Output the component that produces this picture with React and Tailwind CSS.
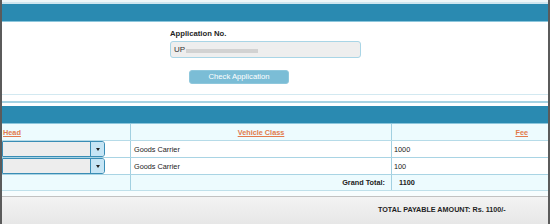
import React from 'react'

const rows = [
  { vehicleClass: 'Goods Carrier', fee: '1000' },
  { vehicleClass: 'Goods Carrier', fee: '100' },
]

function HeadSelect() {
  return (
    <div className="flex h-[16px] w-[103px] border border-[#3a8db5] bg-[#ededed] rounded-r-[3px] overflow-hidden">
      <div className="flex-1" />
      <div className="flex w-[14px] items-center justify-center border-l border-[#3a8db5] bg-[#c6e5f5]">
        <span className="block h-0 w-0 border-x-[2.5px] border-t-[3px] border-x-transparent border-t-[#222]" />
      </div>
    </div>
  )
}

export default function App() {
  return (
    <div className="h-[224px] w-[550px] overflow-hidden border-x-2 border-[#5b5b5b] bg-white font-['Liberation_Sans',Arial,sans-serif] text-[#222]">
      <div className="h-[2px] bg-[#eef6f8]" />
      <div className="h-[2px] bg-[#cfe6ef]" />
      <div className="h-[17px] bg-[#2a8ab1]" />
      <div className="h-[1px] bg-[#8cc6dc]" />

      <div className="flex h-[72px] flex-col items-start pl-[168px] pt-[7px]">
        <div className="text-[7.7px] font-bold leading-[9px] text-[#1f1f1f]">Application No.</div>
        <div className="mt-[3px] flex h-[17px] w-[191px] items-center rounded-[3px] border border-[#a9d5e6] bg-[#eeeeee] pl-[3px]">
          <span className="text-[8px] leading-none text-[#333]">UP</span>
          <span className="ml-[1px] mt-[2px] block h-[4px] w-[72px] bg-[#d2d2d2] blur-[0.6px]" />
        </div>
        <button className="ml-[19px] mt-[12px] flex h-[14px] w-[100px] items-center justify-center rounded-[3px] border border-[#8ec7dc] bg-[#7bbdd6] text-[7.7px] leading-none text-white">
          Check Application
        </button>
      </div>

      <div className="h-[1px] bg-[#d3e9f1]" />
      <div className="h-[6px]" />
      <div className="h-[2px] bg-[#a6d3e3]" />
      <div className="h-[3px]" />
      <div className="h-[17px] bg-[#2a8ab1]" />
      <div className="h-[1px] bg-[#8cc6dc]" />

      <div className="text-[7.3px] leading-[9px]">
        <div className="grid h-[17px] grid-cols-[128px_261px_1fr] border-b border-[#b6dbe8] bg-[#edfbfe]">
          <div className="flex items-center pl-[1px]">
            <span className="font-bold text-[#e27a4c] underline">Head</span>
          </div>
          <div className="flex items-center justify-center border-l border-[#a2d0e1]">
            <span className="font-bold text-[#e27a4c] underline">Vehicle Class</span>
          </div>
          <div className="flex items-center justify-end border-l border-[#a2d0e1] pr-[20px]">
            <span className="font-bold text-[#e27a4c] underline">Fee</span>
          </div>
        </div>
        {rows.map((row, i) => (
          <div key={i} className="grid h-[17px] grid-cols-[128px_261px_1fr] border-b border-[#a9d4e4] bg-white">
            <div className="flex items-center">
              <HeadSelect />
            </div>
            <div className="flex items-center border-l border-[#a2d0e1] pl-[3px]">{row.vehicleClass}</div>
            <div className="flex items-center border-l border-[#a2d0e1] pl-[2px]">{row.fee}</div>
          </div>
        ))}
        <div className="grid h-[16px] grid-cols-[128px_261px_1fr] border-b border-[#bfe0ea] bg-[#edfbfe]">
          <div />
          <div className="flex items-center justify-end border-l border-[#a2d0e1] pr-[6px] font-bold">Grand Total:</div>
          <div className="flex items-center border-l border-[#a2d0e1] pl-[7px] font-bold">1100</div>
        </div>
      </div>

      <div className="h-[5px] bg-[#f7fdfe]" />
      <div className="h-[28px] border-t border-[#c2c2c2] bg-gradient-to-b from-[#f3f3f3] to-[#e7e7e7] pl-[376px] pt-[8px]">
        <div className="text-[7.2px] font-bold leading-[9px] text-[#1f1f1f]">TOTAL PAYABLE AMOUNT: Rs. 1100/-</div>
      </div>
    </div>
  )
}
